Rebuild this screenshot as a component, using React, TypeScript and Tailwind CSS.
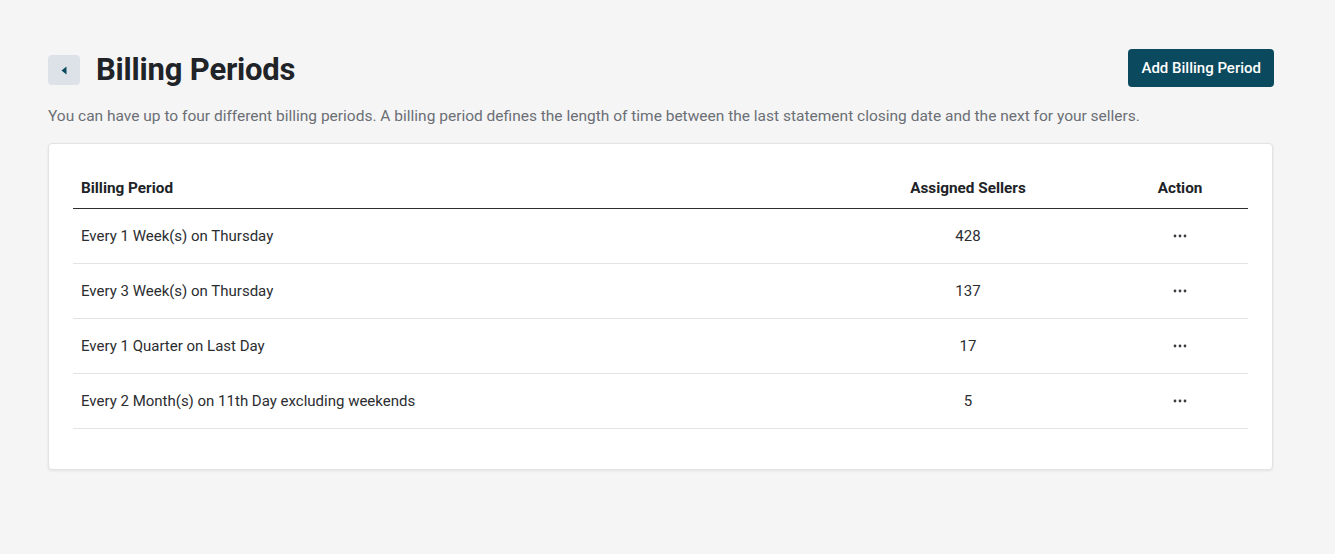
import React from 'react';

interface IBillingPeriod {
  label: string;
  sellers: number;
}

const periods: IBillingPeriod[] = [
  { label: 'Every 1 Week(s) on Thursday', sellers: 428 },
  { label: 'Every 3 Week(s) on Thursday', sellers: 137 },
  { label: 'Every 1 Quarter on Last Day', sellers: 17 },
  { label: 'Every 2 Month(s) on 11th Day excluding weekends', sellers: 5 },
];

function Dots() {
  return (
    <svg width="14" height="4" viewBox="0 0 14 4" fill="#3a3d42">
      <circle cx="2" cy="2" r="1.4" />
      <circle cx="7" cy="2" r="1.4" />
      <circle cx="12" cy="2" r="1.4" />
    </svg>
  );
}

export default function App() {
  return (
    <div
      className="min-h-[554px] bg-[#f5f5f5] px-[48px] pt-[49px] text-[#2b2d31]"
      style={{ fontFamily: 'Roboto, "Liberation Sans", sans-serif' }}
    >
      <div className="flex items-start justify-between pr-[13px]">
        <div className="flex items-center gap-4">
          <button className="flex h-[30px] w-[32px] items-center justify-center rounded bg-[#dde2e8]">
            <svg width="6" height="9" viewBox="0 0 6 9" fill="#0b4a5e">
              <path d="M5.5 0.5 L0.5 4.5 L5.5 8.5 Z" />
            </svg>
          </button>
          <h1 className="text-[31px] font-bold leading-[42px] tracking-[-0.2px] text-[#202327]">Billing Periods</h1>
        </div>
        <button className="h-[38px] rounded bg-[#0b4a5e] px-[13px] text-[15px] font-medium text-white">
          Add Billing Period
        </button>
      </div>

      <p className="mt-[14px] text-[15.5px] leading-[22px] text-[#6b6f75]">
        You can have up to four different billing periods. A billing period defines the length of time between the last statement closing date and the next for your sellers.
      </p>

      <div className="mt-[16px] mr-[14px] rounded border border-[#e3e3e3] bg-white px-[24px] pt-[24px] pb-[40px] shadow-[0_1px_3px_rgba(0,0,0,0.08)]">
        <div className="grid h-[41px] grid-cols-[1fr_160px_136px] items-center gap-x-[64px] border-b border-[#2b2d31] text-[15.3px] font-bold text-[#202327]">
          <div className="pl-2">Billing Period</div>
          <div className="text-center">Assigned Sellers</div>
          <div className="text-center">Action</div>
        </div>
        {periods.map((p) => (
          <div
            key={p.label}
            className="grid h-[55px] grid-cols-[1fr_160px_136px] items-center gap-x-[64px] border-b border-[#e2e4e8] text-[15px]"
          >
            <div className="pl-2">{p.label}</div>
            <div className="text-center">{p.sellers}</div>
            <div className="flex justify-center">
              <Dots />
            </div>
          </div>
        ))}
      </div>
    </div>
  );
}
